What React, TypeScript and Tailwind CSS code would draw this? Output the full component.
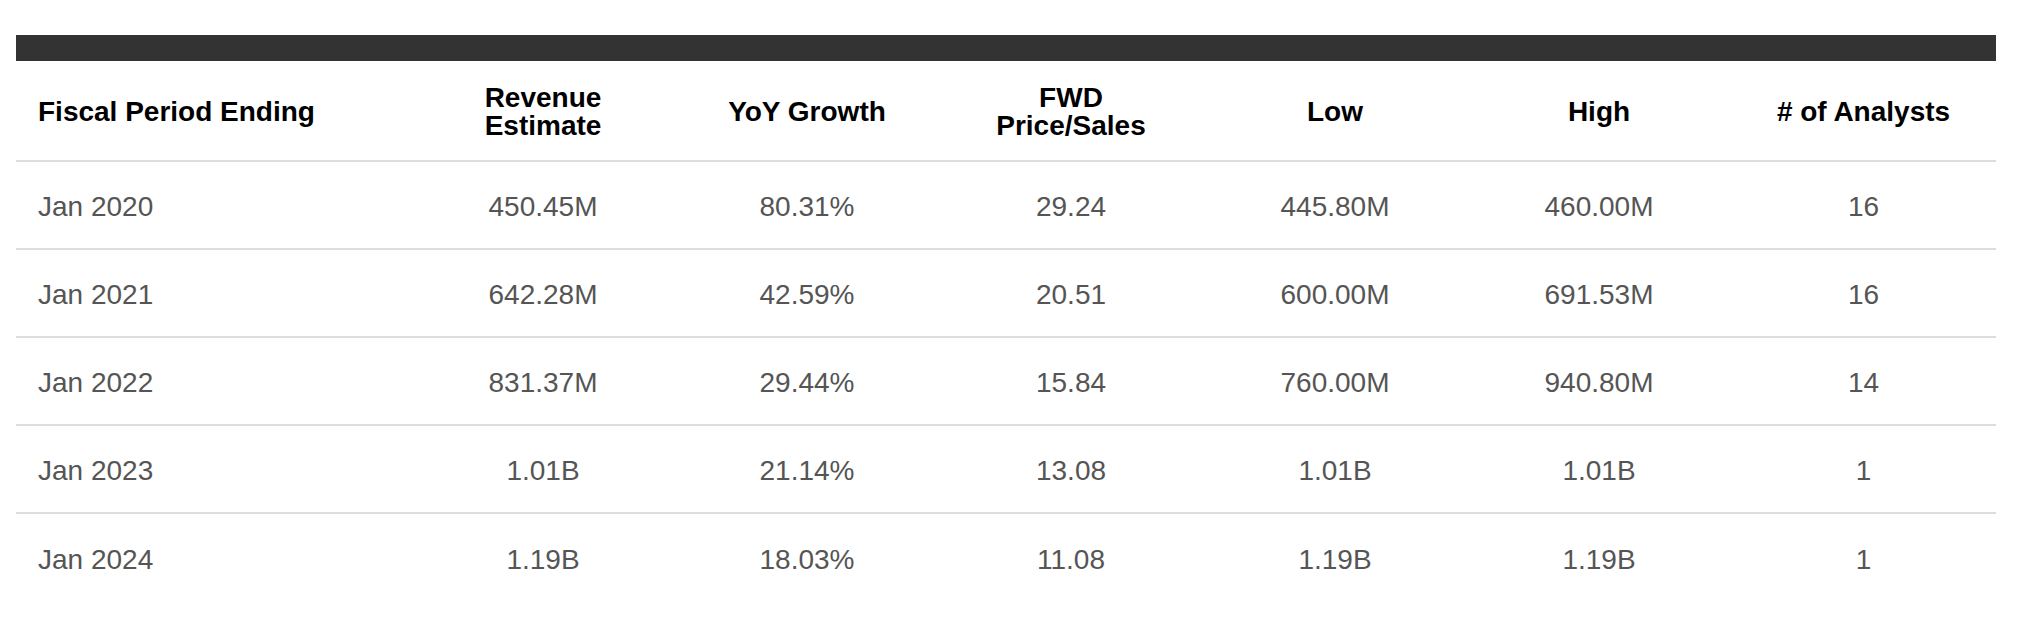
import React from "react";

const rows = [
  ["Jan 2020", "450.45M", "80.31%", "29.24", "445.80M", "460.00M", "16"],
  ["Jan 2021", "642.28M", "42.59%", "20.51", "600.00M", "691.53M", "16"],
  ["Jan 2022", "831.37M", "29.44%", "15.84", "760.00M", "940.80M", "14"],
  ["Jan 2023", "1.01B", "21.14%", "13.08", "1.01B", "1.01B", "1"],
  ["Jan 2024", "1.19B", "18.03%", "11.08", "1.19B", "1.19B", "1"],
];

const headers: React.ReactNode[] = [
  "Fiscal Period Ending",
  <>Revenue<br />Estimate</>,
  "YoY Growth",
  <>FWD<br />Price/Sales</>,
  "Low",
  "High",
  "# of Analysts",
];

export default function App() {
  return (
    <div className="w-[2024px] h-[626px] bg-white pt-[35px] pl-[16px]" style={{ fontFamily: '"Liberation Sans", Arial, sans-serif' }}>
      <div className="w-[1980px]">
        <div className="h-[26px] bg-[#333333]" />
        <div className="grid grid-cols-[395px_264px_264px_264px_264px_264px_265px] h-[101px] border-b-2 border-[#dddddd] items-center">
          {headers.map((h, i) => (
            <div
              key={i}
              className={
                "pt-[3px] text-[28px] leading-[28px] font-bold text-black " +
                (i === 0 ? "pl-[22px] text-left" : "text-center")
              }
            >
              {h}
            </div>
          ))}
        </div>
        {rows.map((r, ri) => (
          <div
            key={ri}
            className={
              "grid grid-cols-[395px_264px_264px_264px_264px_264px_265px] h-[88px] items-center " +
              (ri < rows.length - 1 ? "border-b-2 border-[#dddddd]" : "")
            }
          >
            {r.map((c, ci) => (
              <div
                key={ci}
                className={
                  "pt-[3px] text-[28px] leading-[32px] text-[#555555] " +
                  (ci === 0 ? "pl-[22px] text-left" : "text-center")
                }
              >
                {c}
              </div>
            ))}
          </div>
        ))}
      </div>
    </div>
  );
}
